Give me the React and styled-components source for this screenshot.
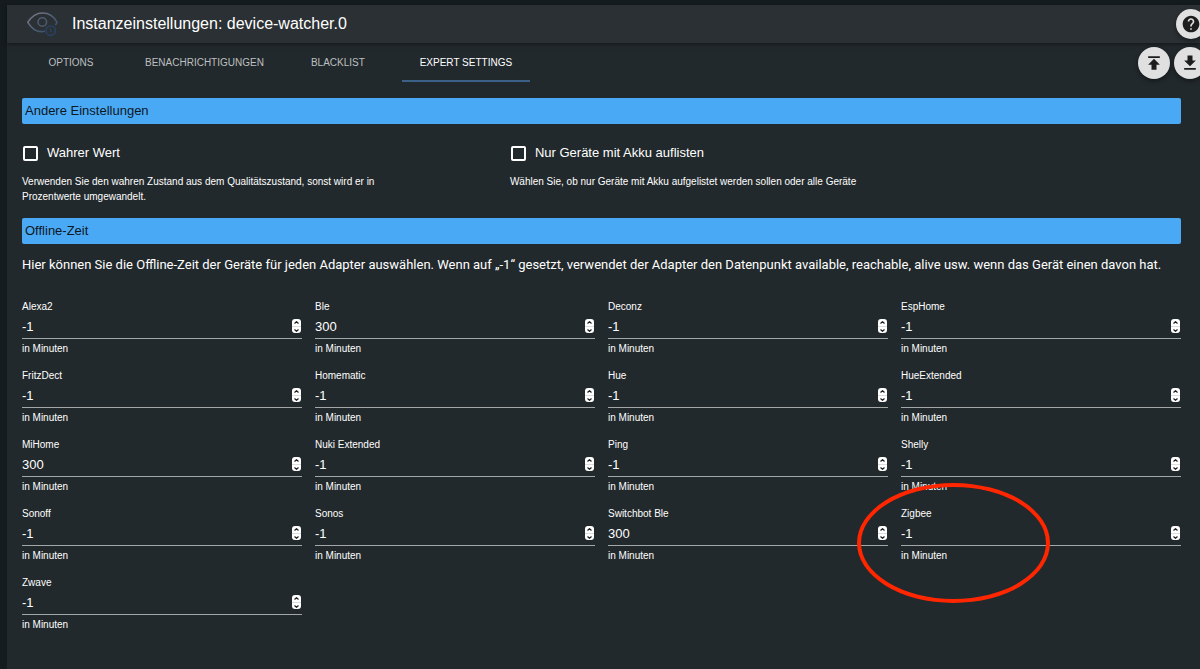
import React, { useState } from 'react'
import styled, { createGlobalStyle } from 'styled-components'
import { MdHelp, MdPublish, MdDownload } from 'react-icons/md'

const GlobalStyle = createGlobalStyle`
    *{
        box-sizing: border-box;
    }
    body{
        margin: 0;
        background: #151c1f;
        color: #fff;
        font-family: "Liberation Sans", Arial, sans-serif;
    }
    button, input{
        font-family: inherit;
        color: inherit;
    }
`

const TABS = ['Options', 'Benachrichtigungen', 'Blacklist', 'Expert Settings']

const ADAPTERS = [
    { id: 'alexa2', name: 'Alexa2', value: -1 },
    { id: 'ble', name: 'Ble', value: 300 },
    { id: 'deconz', name: 'Deconz', value: -1 },
    { id: 'esphome', name: 'EspHome', value: -1 },
    { id: 'fritzdect', name: 'FritzDect', value: -1 },
    { id: 'homematic', name: 'Homematic', value: -1 },
    { id: 'hue', name: 'Hue', value: -1 },
    { id: 'hueext', name: 'HueExtended', value: -1 },
    { id: 'mihome', name: 'MiHome', value: 300 },
    { id: 'nuki', name: 'Nuki Extended', value: -1 },
    { id: 'ping', name: 'Ping', value: -1 },
    { id: 'shelly', name: 'Shelly', value: -1 },
    { id: 'sonoff', name: 'Sonoff', value: -1 },
    { id: 'sonos', name: 'Sonos', value: -1 },
    { id: 'switchbot', name: 'Switchbot Ble', value: 300 },
    { id: 'zigbee', name: 'Zigbee', value: -1, marked: true },
    { id: 'zwave', name: 'Zwave', value: -1 },
]

const Page = styled.div`
    min-height: 100vh;
    padding: 5px 0 0 7px;
    display: flex;
    overflow: hidden;
`
const Dialog = styled.main`
    flex: 1;
    min-width: 0;
    background: #22292c;
`
const Header = styled.header`
    display: flex;
    align-items: center;
    height: 38px;
    padding-left: 20px;
    background: #2a3033;
    box-shadow: 0 1px 4px rgba(0, 0, 0, 0.5);
    h1{
        flex: 1;
        margin: 0 0 0 14px;
        font-size: 16px;
        line-height: 20px;
        font-weight: normal;
    }
`
const RoundButton = styled.button`
    flex: none;
    display: flex;
    align-items: center;
    justify-content: center;
    width: ${p => p.$size}px;
    height: ${p => p.$size}px;
    padding: 0;
    border: 0;
    border-radius: 50%;
    background: #e0e0e0;
    color: #1d1d1d;
    box-shadow: 0 2px 5px rgba(0, 0, 0, 0.45);
`
const HelpButton = styled(RoundButton)`
    margin-right: -6px;
`
const TabBar = styled.div`
    display: flex;
    justify-content: space-between;
`
const TabList = styled.div`
    display: flex;
`
const Tab = styled.button`
    min-width: 128px;
    height: 39px;
    padding: 2px 10px 0;
    border: 0;
    border-bottom: 2px solid ${p => p.$active ? '#3b6189' : 'transparent'};
    background: none;
    color: ${p => p.$active ? '#fff' : '#bdbfc0'};
    font-size: 10px;
    text-transform: uppercase;
`
const Actions = styled.div`
    display: flex;
    gap: 4px;
    margin: 4px -6px 0 0;
`
const Content = styled.div`
    padding: 16px 19px 36px 15px;
`
const SectionTitle = styled.h2`
    margin: 0;
    padding: 0 3px;
    border-radius: 2px;
    background: #4aa9f5;
    color: #0e171d;
    font-size: 13px;
    line-height: 26px;
    font-weight: normal;
`
const Options = styled.div`
    display: grid;
    grid-template-columns: 5fr 5fr 2fr;
    margin-right: -12px;
    padding: 20px 0 14px;
`
const OptionStyle = styled.div`
    label{
        display: flex;
        align-items: center;
        gap: 9px;
        padding-left: 1px;
        font-size: 13px;
        line-height: 18px;
    }
    p{
        max-width: 400px;
        margin: 12px 0 0;
        font-size: 10px;
        line-height: 15px;
    }
`
const CheckBox = styled.input`
    appearance: none;
    width: 15px;
    height: 15px;
    margin: 0;
    border: 2px solid #fff;
    border-radius: 2px;
    &:checked{
        background: #4aa9f5;
    }
`
const Intro = styled.p`
    margin: 12px 0 26px;
    font-family: Roboto, sans-serif;
    font-size: 13px;
    line-height: 18px;
`
const Fields = styled.div`
    display: grid;
    grid-template-columns: repeat(4, 1fr);
    gap: 13px;
`
const FieldStyle = styled.div`
    position: relative;
    font-size: 10px;
    line-height: 14px;
    label, small{
        display: block;
        font-size: 10px;
    }
    small{
        margin-top: 3px;
    }
`
const Marker = styled.span`
    position: absolute;
    top: -24px;
    left: -44px;
    width: 193px;
    height: 120px;
    border: 4px solid #ff2600;
    border-radius: 50%;
    pointer-events: none;
`
const InputRow = styled.div`
    display: flex;
    align-items: center;
    height: 25px;
    padding-right: 1px;
    border-bottom: 1px solid #a3a7a8;
    input{
        flex: 1;
        min-width: 0;
        padding: 0;
        border: 0;
        outline: none;
        background: none;
        font-size: 13px;
        appearance: textfield;
    }
    input::-webkit-inner-spin-button{
        display: none;
    }
`
const Stepper = styled.span`
    display: flex;
    flex-direction: column;
    width: 9px;
    height: 14px;
    border-radius: 3px;
    overflow: hidden;
    background: #fff;
    button{
        display: flex;
        align-items: center;
        justify-content: center;
        height: 7px;
        padding: 0;
        border: 0;
        background: none;
        color: #222;
    }
    button + button{
        border-top: 1px solid #ddd;
    }
`

const EyeLogo = () => (
    <svg width="31" height="25" viewBox="0 0 31 25" fill="none" strokeWidth="1.6" aria-hidden="true">
        <defs>
            <linearGradient id="eye" x1="0" y1="0" x2="1" y2="1">
                <stop offset="0" stopColor="#7c7d86" />
                <stop offset="1" stopColor="#2b4669" />
            </linearGradient>
        </defs>
        <path d="M18 19.300C10 21 4 15.500 .8 10.300C4.500 4.500 9.500 1 15.500 1C21.500 1 27 4.500 30 10.300C29.400 11.600 28.900 12.300 28.200 13" stroke="url(#eye)" />
        <circle cx="15.300" cy="10" r="4.300" stroke="#4f5a70" />
        <circle cx="23.700" cy="18.700" r="4.700" stroke="#2a4263" />
        <path d="M23.500 16v3l1.800 1.300" stroke="#2a4263" strokeWidth="1.200" />
    </svg>
)

const Option = ({ id, label, help }) => {
    const [checked, setChecked] = useState(false)
    return (
        <OptionStyle>
            <label htmlFor={id}>
                <CheckBox id={id} type="checkbox" checked={checked} onChange={ev => setChecked(ev.target.checked)} />
                {label}
            </label>
            <p>{help}</p>
        </OptionStyle>
    )
}

const Field = ({ id, name, value, marked, onChange }) => (
    <FieldStyle>
        <label htmlFor={id}>{name}</label>
        <InputRow>
            <input id={id} type="number" value={value} onChange={ev => onChange(id, ev.target.value)} />
            <Stepper>
                <button type="button" aria-label={`${name} +`} onClick={() => onChange(id, Number(value) + 1)}>
                    <svg width="5" height="3" viewBox="0 0 5 3" fill="none" stroke="currentColor" strokeWidth="1.200"><path d="M.5 2.500L2.500 .7L4.500 2.500" /></svg>
                </button>
                <button type="button" aria-label={`${name} -`} onClick={() => onChange(id, Number(value) - 1)}>
                    <svg width="5" height="3" viewBox="0 0 5 3" fill="none" stroke="currentColor" strokeWidth="1.200"><path d="M.5 .5L2.500 2.300L4.500 .5" /></svg>
                </button>
            </Stepper>
        </InputRow>
        <small>in Minuten</small>
        {marked && <Marker />}
    </FieldStyle>
)

export default function App() {

    const [tab, setTab] = useState('Expert Settings')
    const [adapters, setAdapters] = useState(ADAPTERS)

    const onChange = (id, value) => {
        setAdapters(adapters.map(e => e.id === id ? { ...e, value } : e))
    }

  return (
    <Page>
        <GlobalStyle />
        <Dialog>
            <Header>
                <EyeLogo />
                <h1>Instanzeinstellungen: device-watcher.0</h1>
                <HelpButton $size={30} aria-label="Hilfe"><MdHelp size={20} /></HelpButton>
            </Header>
            <TabBar>
                <TabList role="tablist">
                    {
                        TABS.map(e => <Tab key={e} role="tab" aria-selected={e === tab} $active={e === tab} onClick={() => setTab(e)}>{e}</Tab>)
                    }
                </TabList>
                <Actions>
                    <RoundButton $size={32} aria-label="Importieren"><MdPublish size={20} /></RoundButton>
                    <RoundButton $size={32} aria-label="Exportieren"><MdDownload size={20} /></RoundButton>
                </Actions>
            </TabBar>
            <Content>
                <SectionTitle>Andere Einstellungen</SectionTitle>
                <Options>
                    <Option
                        id="trueValue"
                        label="Wahrer Wert"
                        help="Verwenden Sie den wahren Zustand aus dem Qualitätszustand, sonst wird er in Prozentwerte umgewandelt."
                    />
                    <Option
                        id="batteryOnly"
                        label="Nur Geräte mit Akku auflisten"
                        help="Wählen Sie, ob nur Geräte mit Akku aufgelistet werden sollen oder alle Geräte"
                    />
                </Options>
                <SectionTitle>Offline-Zeit</SectionTitle>
                <Intro>Hier können Sie die Offline-Zeit der Geräte für jeden Adapter auswählen. Wenn auf „-1“ gesetzt, verwendet der Adapter den Datenpunkt available, reachable, alive usw. wenn das Gerät einen davon hat.</Intro>
                <Fields>
                    {
                        adapters.map(e => <Field key={e.id} {...e} onChange={onChange} />)
                    }
                </Fields>
            </Content>
        </Dialog>
    </Page>
  )
}
